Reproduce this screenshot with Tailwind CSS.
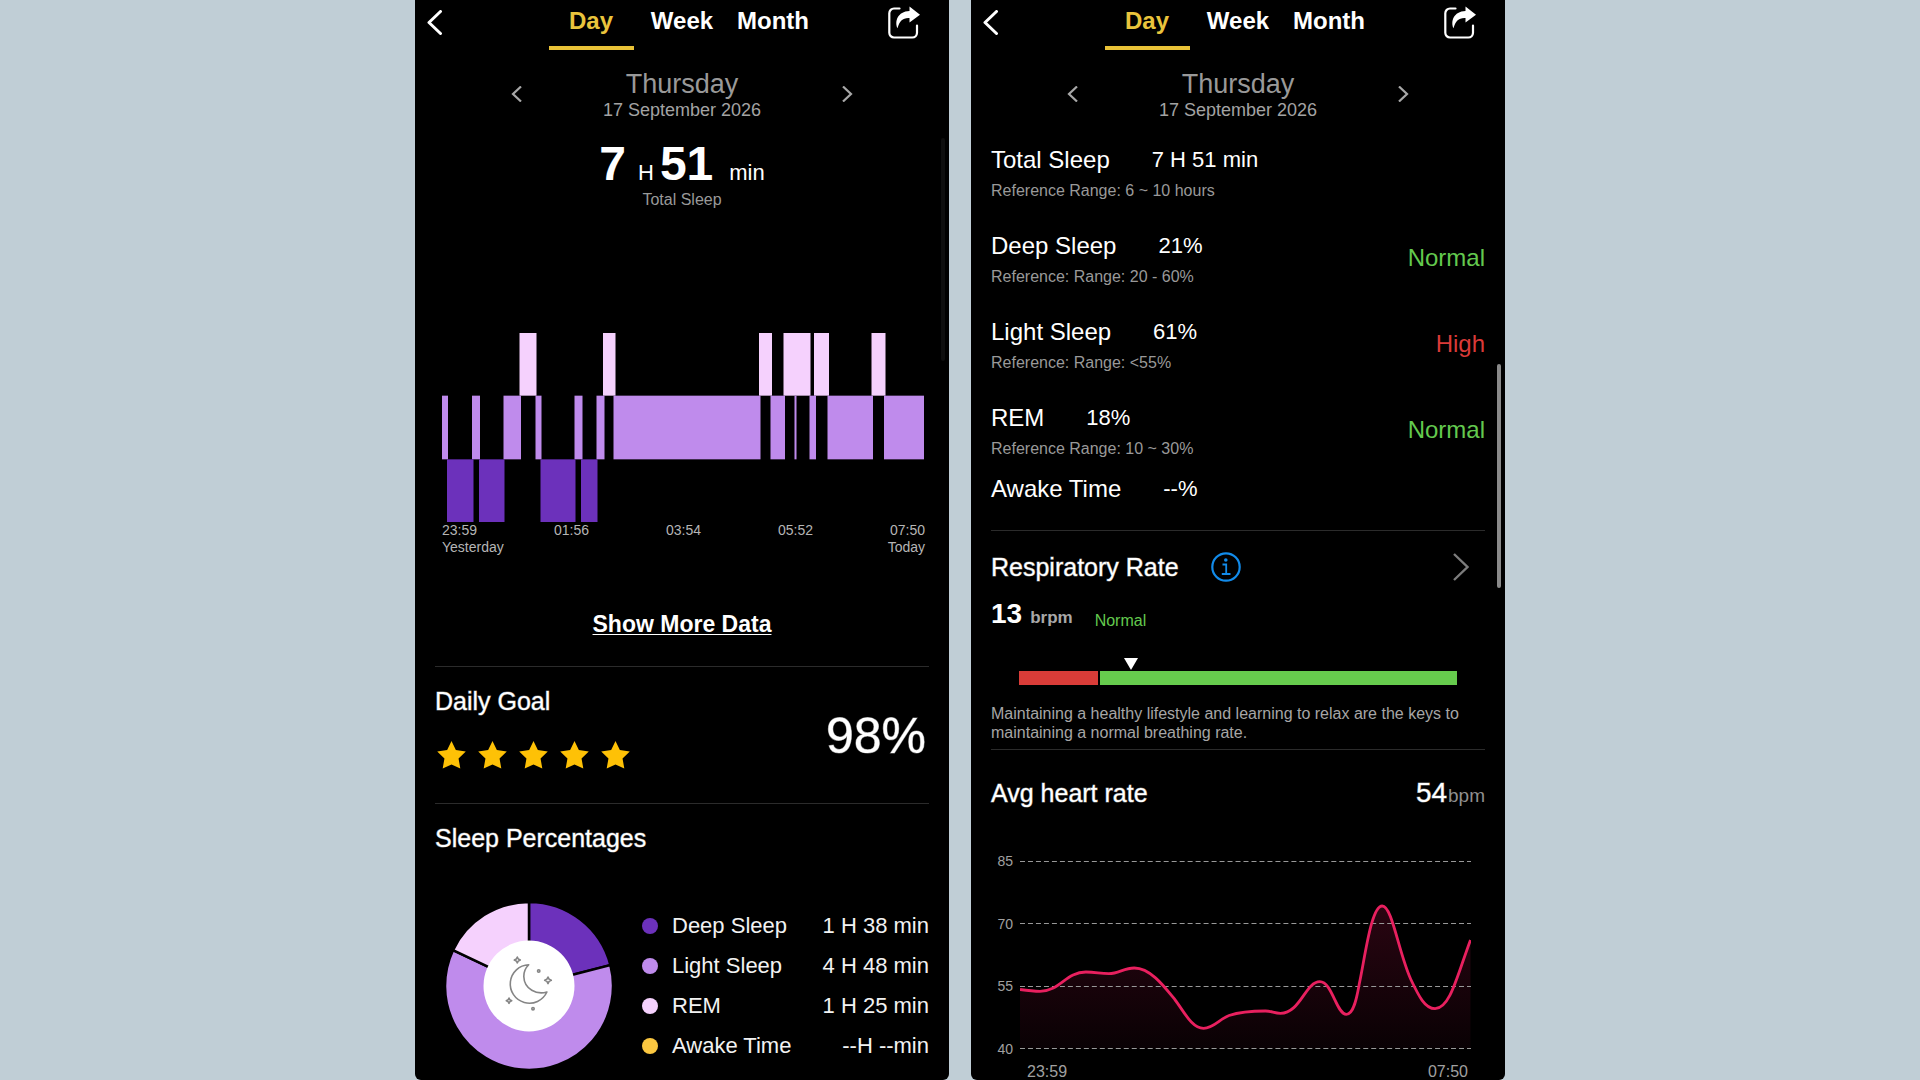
<!DOCTYPE html>
<html lang="en">
<head>
    <meta charset="UTF-8">
    <meta name="viewport" content="width=device-width, initial-scale=1.0">
    <title>Sleep - Day</title>
    <script src="https://cdn.jsdelivr.net/npm/@tailwindcss/browser@4"></script>
</head>
<body class="bg-[#c0ced6] min-h-screen font-['Liberation_Sans',Arial,sans-serif] text-white">
    <main class="grid grid-cols-1 lg:grid-cols-2 gap-[22px] max-w-[1090px] min-h-screen mx-auto">

        <!-- Sleep overview -->
        <section class="relative bg-black rounded-b-md overflow-hidden">
            <header class="grid grid-cols-[1fr_auto_1fr]">
                <button type="button" aria-label="Back" class="justify-self-start self-start pl-3 pt-2.5">
                    <svg class="w-4 h-[25px]" viewBox="0 0 16 25" fill="none" stroke="#fff" stroke-width="3" stroke-linecap="round" stroke-linejoin="round"><path d="M13.5 1.5 2 12.5l11.5 11"/></svg>
                </button>
                <nav class="grid grid-cols-3 gap-1.5 text-2xl leading-none font-bold">
                    <button type="button" class="w-[85px] h-[50px] pb-1 border-b-4 border-[#e9c237] text-[#eac43c]">Day</button>
                    <button type="button" class="w-[85px] h-[50px] pb-1 border-b-4 border-transparent">Week</button>
                    <button type="button" class="w-[85px] h-[50px] pb-1 border-b-4 border-transparent">Month</button>
                </nav>
                <button type="button" aria-label="Share" class="justify-self-end self-start pr-[29px] pt-[7px]">
                    <svg class="w-8 h-8 overflow-visible" viewBox="0 0 32 32" fill="none"><path d="M11.5 1.500H6A4.700 4.700 0 0 0 1.300 6.200v19.600A4.700 4.700 0 0 0 6 30.500h18.300a4.700 4.700 0 0 0 4.700-4.700V18.500" stroke="#fff" stroke-width="2.200" stroke-linecap="round"/><path d="M21.500-.5 32 7.700 21.500 15.500V11C15 10.500 11.500 14 9.500 21.300 6.500 14.500 9.500 4.500 21.500 4Z" fill="#fff"/></svg>
                </button>
            </header>

            <div class="flex justify-between w-[342px] mx-auto pt-5">
                <button type="button" aria-label="Previous day" class="h-12">
                    <svg class="w-[11px] h-4" viewBox="0 0 11 16" fill="none" stroke="#a8a8a8" stroke-width="2.200"><path d="M10 .5 2 8l8 7.500"/></svg>
                </button>
                <div class="text-center">
                    <h1 class="text-[27px] leading-7 text-[#999]">Thursday</h1>
                    <p class="text-lg leading-6 text-[#a3a3a3]">17 September 2026</p>
                </div>
                <button type="button" aria-label="Next day" class="h-12">
                    <svg class="w-[11px] h-4" viewBox="0 0 11 16" fill="none" stroke="#a8a8a8" stroke-width="2.200"><path d="m1 .5 8 7.500-8 7.500"/></svg>
                </button>
            </div>

            <div class="mt-[18px] text-center">
                <p class="flex items-baseline justify-center leading-none">
                    <span class="text-5xl leading-[48px] font-bold">7</span>
                    <span class="ml-3 text-[22px] leading-none">H</span>
                    <span class="ml-1.5 text-5xl leading-[48px] font-bold">51</span>
                    <span class="ml-4 text-[22px] leading-none">min</span>
                </p>
                <p class="text-base leading-6 text-[#999]">Total Sleep</p>
            </div>

            <!-- Sleep stages -->
            <div class="mt-[121px] pl-[27px] pr-6">
                <svg class="block w-full h-[189px]" viewBox="0 0 483 190" preserveAspectRatio="none">
                    <g fill="#f5d1fd">
                        <rect x="77.500" width="17" height="63"/>
                        <rect x="161" width="12.500" height="63"/>
                        <rect x="317" width="13" height="63"/>
                        <rect x="341.500" width="27" height="63"/>
                        <rect x="372" width="15" height="63"/>
                        <rect x="429.500" width="14" height="63"/>
                    </g>
                    <g fill="#bf8bec">
                        <rect x="0" y="63" width="6" height="64"/>
                        <rect x="30" y="63" width="8" height="64"/>
                        <rect x="61.500" y="63" width="17.500" height="64"/>
                        <rect x="93.500" y="63" width="6" height="64"/>
                        <rect x="132.500" y="63" width="8" height="64"/>
                        <rect x="154.500" y="63" width="8" height="64"/>
                        <rect x="171.500" y="63" width="147" height="64"/>
                        <rect x="328.500" y="63" width="14.500" height="64"/>
                        <rect x="352.500" y="63" width="2" height="64"/>
                        <rect x="367.500" y="63" width="6.500" height="64"/>
                        <rect x="385.500" y="63" width="45.500" height="64"/>
                        <rect x="442" y="63" width="40" height="64"/>
                    </g>
                    <g fill="#6c31bb">
                        <rect x="5" y="127" width="26.500" height="63"/>
                        <rect x="37" y="127" width="25.500" height="63"/>
                        <rect x="98.500" y="127" width="35" height="63"/>
                        <rect x="139" y="127" width="16.500" height="63"/>
                    </g>
                </svg>
                <div class="text-sm leading-[17px] text-[#b5b5b5]">
                    <div class="flex justify-between"><span>23:59</span><span>01:56</span><span>03:54</span><span>05:52</span><span>07:50</span></div>
                    <div class="flex justify-between"><span>Yesterday</span><span>Today</span></div>
                </div>
            </div>

            <div class="mt-[54px] text-center">
                <a href="#more" class="text-[23px] leading-7 font-bold underline decoration-1 underline-offset-2">Show More Data</a>
            </div>

            <div class="mt-[27px] mx-5 border-t border-[#2b2b2b] flex items-center justify-between">
                <div class="pt-5 pb-[33px]">
                    <h2 class="text-[25px] leading-7 [-webkit-text-stroke:1px_#ffffff70]">Daily Goal</h2>
                    <div class="mt-[26px] pl-0.5 flex gap-3" role="img" aria-label="5 of 5 stars">
                        <svg class="w-[29px] h-[29px]" viewBox="3 2 28 28" fill="#fec106"><path id="star" d="m17 2 4.200 8.800 9.600 1.300-7 6.700 1.700 9.700-8.500-3.800-8.500 3.800 1.700-9.700-7-6.700 9.600-1.300Z"/></svg>
                        <svg class="w-[29px] h-[29px]" viewBox="3 2 28 28" fill="#fec106"><use href="#star"/></svg>
                        <svg class="w-[29px] h-[29px]" viewBox="3 2 28 28" fill="#fec106"><use href="#star"/></svg>
                        <svg class="w-[29px] h-[29px]" viewBox="3 2 28 28" fill="#fec106"><use href="#star"/></svg>
                        <svg class="w-[29px] h-[29px]" viewBox="3 2 28 28" fill="#fec106"><use href="#star"/></svg>
                    </div>
                </div>
                <p class="pr-[3px] pt-0.5 text-[50px] leading-none [-webkit-text-stroke:1px_#ffffff70]">98%</p>
            </div>

            <div class="mx-5 pt-5 border-t border-[#2b2b2b]">
                <h2 class="text-[25px] leading-7 [-webkit-text-stroke:1px_#ffffff70]">Sleep Percentages</h2>
                <div class="mt-[51px] pl-[11px] flex items-center">
                    <svg class="w-[166px] h-[166px] shrink-0" viewBox="0 0 166 166">
                        <g stroke="#000" stroke-width="2.500">
                            <path d="M83 83V-1A84 84 0 0 1 164.400 62.100Z" fill="#6c31bb"/>
                            <path d="M83 83 164.400 62.100A84 84 0 1 1 7 47.200Z" fill="#bf8bec"/>
                            <path d="M83 83 7 47.200A84 84 0 0 1 83-1Z" fill="#f5d1fd"/>
                        </g>
                        <circle cx="83" cy="83" r="45.500" fill="#fff"/>
                        <g fill="none" stroke="#858585" stroke-width="1.600" stroke-linejoin="round">
                            <path d="M82.700 61.800A19.200 19.200 0 1 0 100.900 89C91 92 78.200 86.500 77.800 73.500 77.700 69 79.500 65 82.700 61.800Z"/>
                            <path d="m71.300 54 1 2 2 1-2 1-1 2-1-2-2-1 2-1Z"/>
                            <path d="m102 74 1.100 2.200 2.200 1.100-2.200 1.100-1.100 2.200-1.100-2.200-2.200-1.100 2.200-1.100Z"/>
                            <path d="m63 95 .9 1.800 1.800.9-1.800.9-.9 1.800-.9-1.800-1.800-.9 1.800-.9Z"/>
                            <circle cx="92.700" cy="68" r="1.200"/>
                            <circle cx="87" cy="105.700" r="1.200"/>
                        </g>
                    </svg>
                    <ul class="flex-1 ml-[30px] text-[22px] leading-10 text-[#f2f2f2]">
                        <li class="flex items-center gap-3.5"><span class="w-4 h-4 rounded-full bg-[#6c31bb]"></span>Deep Sleep<span class="ml-auto">1 H 38 min</span></li>
                        <li class="flex items-center gap-3.5"><span class="w-4 h-4 rounded-full bg-[#bf8bec]"></span>Light Sleep<span class="ml-auto">4 H 48 min</span></li>
                        <li class="flex items-center gap-3.5"><span class="w-4 h-4 rounded-full bg-[#f5d1fd]"></span>REM<span class="ml-auto">1 H 25 min</span></li>
                        <li class="flex items-center gap-3.5"><span class="w-4 h-4 rounded-full bg-[#fbc740]"></span>Awake Time<span class="ml-auto">--H --min</span></li>
                    </ul>
                </div>
            </div>

            <div class="absolute right-1 top-[138px] w-1 h-[223px] rounded-full bg-[#0e0e0e]"></div>
        </section>

        <!-- Sleep details -->
        <section class="relative bg-black rounded-b-md overflow-hidden">
            <header class="grid grid-cols-[1fr_auto_1fr]">
                <button type="button" aria-label="Back" class="justify-self-start self-start pl-3 pt-2.5">
                    <svg class="w-4 h-[25px]" viewBox="0 0 16 25" fill="none" stroke="#fff" stroke-width="3" stroke-linecap="round" stroke-linejoin="round"><path d="M13.5 1.5 2 12.5l11.5 11"/></svg>
                </button>
                <nav class="grid grid-cols-3 gap-1.5 text-2xl leading-none font-bold">
                    <button type="button" class="w-[85px] h-[50px] pb-1 border-b-4 border-[#e9c237] text-[#eac43c]">Day</button>
                    <button type="button" class="w-[85px] h-[50px] pb-1 border-b-4 border-transparent">Week</button>
                    <button type="button" class="w-[85px] h-[50px] pb-1 border-b-4 border-transparent">Month</button>
                </nav>
                <button type="button" aria-label="Share" class="justify-self-end self-start pr-[29px] pt-[7px]">
                    <svg class="w-8 h-8 overflow-visible" viewBox="0 0 32 32" fill="none"><path d="M11.5 1.500H6A4.700 4.700 0 0 0 1.300 6.200v19.600A4.700 4.700 0 0 0 6 30.500h18.300a4.700 4.700 0 0 0 4.700-4.700V18.500" stroke="#fff" stroke-width="2.200" stroke-linecap="round"/><path d="M21.500-.5 32 7.700 21.500 15.500V11C15 10.500 11.500 14 9.500 21.300 6.500 14.500 9.500 4.500 21.500 4Z" fill="#fff"/></svg>
                </button>
            </header>

            <div class="flex justify-between w-[342px] mx-auto pt-5">
                <button type="button" aria-label="Previous day" class="h-12">
                    <svg class="w-[11px] h-4" viewBox="0 0 11 16" fill="none" stroke="#a8a8a8" stroke-width="2.200"><path d="M10 .5 2 8l8 7.500"/></svg>
                </button>
                <div class="text-center">
                    <h1 class="text-[27px] leading-7 text-[#999]">Thursday</h1>
                    <p class="text-lg leading-6 text-[#a3a3a3]">17 September 2026</p>
                </div>
                <button type="button" aria-label="Next day" class="h-12">
                    <svg class="w-[11px] h-4" viewBox="0 0 11 16" fill="none" stroke="#a8a8a8" stroke-width="2.200"><path d="m1 .5 8 7.500-8 7.500"/></svg>
                </button>
            </div>

            <div class="mt-[22px] mx-5 flex flex-col gap-6 text-2xl leading-8">
                <div>
                    <p class="flex items-center gap-[42px]">Total Sleep<span class="text-[22px]">7 H 51 min</span></p>
                    <p class="text-base leading-[30px] text-[#999]">Reference Range: 6 ~ 10 hours</p>
                </div>
                <div class="flex items-center justify-between">
                    <div>
                        <p class="flex items-center gap-[42px]">Deep Sleep<span class="text-[22px]">21%</span></p>
                        <p class="text-base leading-[30px] text-[#999]">Reference: Range: 20 - 60%</p>
                    </div>
                    <span class="pb-1.5 text-[#63c94e]">Normal</span>
                </div>
                <div class="flex items-center justify-between">
                    <div>
                        <p class="flex items-center gap-[42px]">Light Sleep<span class="text-[22px]">61%</span></p>
                        <p class="text-base leading-[30px] text-[#999]">Reference: Range: &lt;55%</p>
                    </div>
                    <span class="pb-1.5 text-[#da3a38]">High</span>
                </div>
                <div class="flex items-center justify-between">
                    <div>
                        <p class="flex items-center gap-[42px]">REM<span class="text-[22px]">18%</span></p>
                        <p class="text-base leading-[30px] text-[#999]">Reference Range: 10 ~ 30%</p>
                    </div>
                    <span class="pb-1.5 text-[#63c94e]">Normal</span>
                </div>
            </div>
            <p class="mt-[9px] mx-5 flex items-center gap-[42px] text-2xl leading-8">Awake Time<span class="text-[22px]">--%</span></p>

            <!-- Respiratory rate -->
            <div class="mt-[25px] mx-5 pt-[21px] border-t border-[#2b2b2b]">
                <div class="flex items-center">
                    <h2 class="text-[25px] leading-[30px] [-webkit-text-stroke:1px_#ffffff70]">Respiratory Rate</h2>
                    <button type="button" aria-label="About respiratory rate" class="ml-8">
                        <svg class="block w-[30px] h-[30px]" viewBox="0 0 30 30" fill="none" stroke="#128bea" stroke-width="2.200"><circle cx="15" cy="15" r="13.700"/><path d="M11.500 12.500h3.700V22M10.800 22h8.700" stroke-width="1.800"/><circle cx="14.800" cy="8" r="1.800" fill="#128bea" stroke="none"/></svg>
                    </button>
                    <button type="button" aria-label="Open respiratory rate" class="ml-auto pr-4">
                        <svg class="block w-4 h-7" viewBox="0 0 16 28" fill="none" stroke="#7c7c7c" stroke-width="2.400"><path d="m1 1 13.500 13L1 27"/></svg>
                    </button>
                </div>
                <div class="mt-4 flex items-end gap-[22px]">
                    <p class="flex items-baseline gap-2 font-bold"><span class="text-[28px] leading-8">13</span><span class="text-[17px] leading-none text-[#a8a8a8]">brpm</span></p>
                    <span class="text-base leading-[18px] text-[#63c94e]">Normal</span>
                </div>
                <div class="mt-7 px-7">
                    <svg class="block ml-[24%] w-[14px] h-[13px]" viewBox="0 0 14 13" fill="#fff"><path d="M0 0h14L7 12Z"/></svg>
                    <div class="flex gap-0.5 h-3.5">
                        <div class="w-[18%] bg-[#d93c38]"></div>
                        <div class="flex-1 bg-[#66cb4d]"></div>
                    </div>
                </div>
                <p class="mt-[19px] mb-[7px] text-base leading-[19px] text-[#a6a6a6]">Maintaining a healthy lifestyle and learning to relax are the keys to maintaining a normal breathing rate.</p>
            </div>

            <!-- Heart rate -->
            <div class="mx-5 pt-[29px] border-t border-[#2b2b2b]">
                <div class="flex items-center justify-between leading-7">
                    <h2 class="text-[25px] [-webkit-text-stroke:1px_#ffffff70]">Avg heart rate</h2>
                    <p class="flex items-baseline gap-px"><span class="text-[28px] [-webkit-text-stroke:1px_#ffffff70]">54</span><span class="text-[19px] leading-none text-[#8f8f8f]">bpm</span></p>
                </div>
                <div class="mt-[46px] pr-3.5 flex gap-[7px]">
                    <div class="w-[22px] flex flex-col justify-between text-right text-sm leading-4 text-[#a0a0a0]">
                        <span>85</span><span>70</span><span>55</span><span>40</span>
                    </div>
                    <svg class="flex-1 min-w-0 h-[188px] my-2" viewBox="0 0 452 188" preserveAspectRatio="none" fill="none">
                        <defs>
                            <linearGradient id="heartFill" x1="0" y1="45" x2="0" y2="188" gradientUnits="userSpaceOnUse">
                                <stop offset="0" stop-color="#e91e63" stop-opacity=".18"/>
                                <stop offset="1" stop-color="#e91e63" stop-opacity=".04"/>
                            </linearGradient>
                        </defs>
                        <path fill="url(#heartFill)" d="M0 128.500C7 129.500 13 130.300 20 130.300 40 130.300 46 111 66 111 76 111 80 112.700 89 112.700 99 112.700 104 107 114.500 107 131 107 145 126 155.500 139 164 150 172 167.300 184 167.300 194 167.300 200 158 209.500 154.500 220 151 234 150 246 150 252 150 255 152.300 261 152.300 281 152.300 286 120.700 300.500 120.700 313 120.700 317 153.300 327 153.300 335 153.300 338 134 340 123 346 95 352 45 363 45 373 45 379 90 391.500 118 400 136 406 147.700 416 147.700 431 147.700 438 115 451.500 79V187.500H0Z"/>
                        <g stroke="#999" stroke-dasharray="5 3">
                            <path d="M0 .5h452M0 62.500h452M0 125.500h452M0 187.500h452"/>
                        </g>
                        <path stroke="#e8205f" stroke-width="2.800" d="M0 128.500C7 129.500 13 130.300 20 130.300 40 130.300 46 111 66 111 76 111 80 112.700 89 112.700 99 112.700 104 107 114.500 107 131 107 145 126 155.500 139 164 150 172 167.300 184 167.300 194 167.300 200 158 209.500 154.500 220 151 234 150 246 150 252 150 255 152.300 261 152.300 281 152.300 286 120.700 300.500 120.700 313 120.700 317 153.300 327 153.300 335 153.300 338 134 340 123 346 95 352 45 363 45 373 45 379 90 391.500 118 400 136 406 147.700 416 147.700 431 147.700 438 115 451.500 79"/>
                    </svg>
                </div>
                <div class="mt-[7px] pl-9 pr-[17px] flex justify-between text-base leading-4 text-[#a0a0a0]"><span>23:59</span><span>07:50</span></div>
            </div>

            <div class="absolute right-1 top-[364px] w-1 h-56 rounded-full bg-[#8a8a8a]"></div>
        </section>
    </main>
</body>
</html>
